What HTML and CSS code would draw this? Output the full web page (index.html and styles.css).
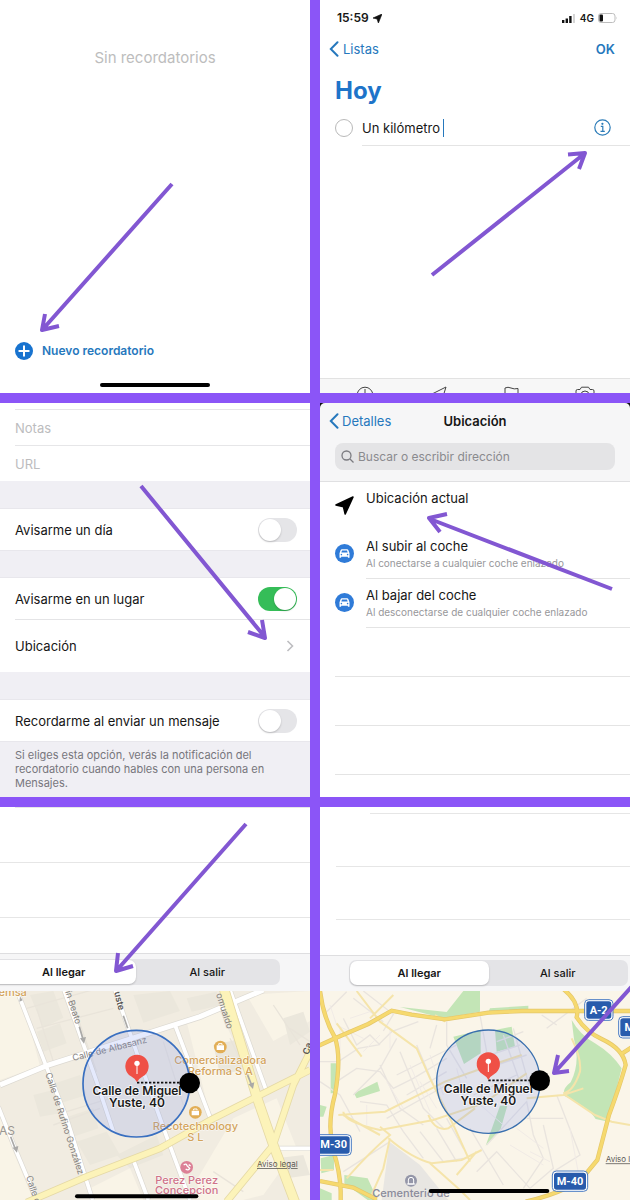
FILE: index.html
```html
<!DOCTYPE html>
<html lang="es">
<head>
<meta charset="utf-8">
<meta name="viewport" content="width=device-width, initial-scale=1">
<title>Recordatorios por ubicación</title>
<link rel="stylesheet" href="styles.css">
</head>
<body>
<main class="board">

  <section class="panel panel-empty">
    <p class="empty-text">Sin recordatorios</p>
    <button class="new-reminder" type="button">
      <svg width="18" height="18" viewBox="0 0 18 18" aria-hidden="true"><circle cx="9" cy="9" r="9" fill="#1873cf"/><path d="M9 4.3v9.4M4.3 9h9.4" stroke="#fff" stroke-width="2" stroke-linecap="round"/></svg>
      Nuevo recordatorio
    </button>
    <div class="home-bar"></div>
    <svg class="arrow" viewBox="0 0 310 393" aria-hidden="true"><path d="M172 184 43 329M45 314l-3 16 17-4"/></svg>
  </section>

  <section class="panel panel-today">
    <div class="status">
      <span class="status-left">15:59
        <svg width="9" height="9" viewBox="0 0 20 20" aria-hidden="true"><path d="M20 0 12 20 9 11 0 9Z" fill="#111" stroke="#111" stroke-width="1.500"/></svg>
      </span>
      <span class="status-right">
        <svg width="14" height="10" viewBox="0 0 14 10" aria-hidden="true"><path d="M0 7h2.4v3H0zM3.6 5.500H6V10H3.600zM7.200 3h2.400v7H7.200z" fill="#111"/><path d="M11 1h2v9h-2z" fill="#d5d5d5"/></svg>
        4G
        <svg width="20" height="10" viewBox="0 0 20 10" aria-hidden="true"><rect x=".5" y=".5" width="16.500" height="9" rx="2.500" fill="none" stroke="#bdbdbd"/><rect x="1.500" y="1.500" width="3.500" height="7" rx="1" fill="#111"/><path d="M18.300 3.500v3q1.200-1.500 0-3z" fill="#bbb"/></svg>
      </span>
    </div>
    <nav class="navbar">
      <a class="back" href="#"><svg width="10" height="16" viewBox="0 0 10 16" aria-hidden="true"><path d="M8.500 1.200 1.800 8l6.700 6.800"/></svg>Listas</a>
      <button class="ok" type="button">OK</button>
    </nav>
    <h1 class="title">Hoy</h1>
    <div class="task">
      <input class="task-check" type="checkbox" aria-label="Completar">
      <div class="task-body">
        <input class="task-name" type="text" value="Un kilómetro" size="10" aria-label="Recordatorio"><span class="caret"></span>
        <button class="info" type="button" aria-label="Información"><svg width="17" height="17" viewBox="0 0 17 17" aria-hidden="true"><circle cx="8.500" cy="8.500" r="7.700" fill="none" stroke="#2c7cb8" stroke-width="1.200"/><circle cx="8.400" cy="4.800" r="1.100" fill="#2c7cb8"/><path d="M6.800 7.300h2v5M6.500 12.400h4.300" fill="none" stroke="#2c7cb8" stroke-width="1.200"/></svg></button>
      </div>
    </div>
    <div class="quickbar">
      <svg viewBox="0 0 20 20" aria-hidden="true"><circle cx="10" cy="9" r="7.800"/><path d="M10 3v6h4"/></svg>
      <svg viewBox="0 0 20 20" aria-hidden="true"><path d="M18 1 4 8l8 2 1 7z"/></svg>
      <svg viewBox="0 0 20 20" aria-hidden="true"><path d="M3 18V2q3-1.500 6 0t7 .5V12H3"/></svg>
      <svg viewBox="0 0 20 20" aria-hidden="true"><path d="M1 16V5q0-1.500 1.500-1.500H5L6.500 1.200h7L15 3.500h2.500Q19 3.500 19 5v11z"/><circle cx="10" cy="9" r="4"/></svg>
    </div>
    <svg class="arrow" viewBox="0 0 310 393" aria-hidden="true"><path d="M112 275 264 154M248 154.500l17-1.500-6 16"/></svg>
  </section>

  <section class="panel panel-details">
    <div class="fields">
      <input class="field" type="text" placeholder="Notas" aria-label="Notas">
      <input class="field" type="url" placeholder="URL" aria-label="URL">
    </div>
    <label class="setting setting-spaced">Avisarme un día <input class="switch" type="checkbox"></label>
    <label class="setting setting-spaced">Avisarme en un lugar <input class="switch" type="checkbox" checked></label>
    <a class="setting setting-link" href="#">Ubicación <svg width="8" height="12" viewBox="0 0 8 12" aria-hidden="true"><path d="M1.500 1 6.500 6l-5 5" fill="none" stroke="#bdbdc0" stroke-width="1.600"/></svg></a>
    <label class="setting setting-spaced">Recordarme al enviar un mensaje <input class="switch" type="checkbox"></label>
    <p class="note">Si eliges esta opción, verás la notificación del recordatorio cuando hables con una persona en Mensajes.</p>
    <svg class="arrow" viewBox="0 0 310 394" aria-hidden="true"><path d="M141 83 264 233M248 229l17 6-3-18"/></svg>
  </section>

  <section class="panel panel-place">
    <header class="place-head">
      <nav class="place-nav">
        <a class="back" href="#"><svg width="10" height="16" viewBox="0 0 10 16" aria-hidden="true"><path d="M8.500 1.200 1.800 8l6.700 6.800"/></svg>Detalles</a>
        <h2>Ubicación</h2>
      </nav>
      <label class="search">
        <svg width="13" height="13" viewBox="0 0 13 13" aria-hidden="true"><circle cx="5.500" cy="5.500" r="4.500"/><path d="m9 9 3.500 3.500"/></svg>
        <input type="search" placeholder="Buscar o escribir dirección" aria-label="Buscar o escribir dirección">
      </label>
    </header>
    <ul class="places">
      <li class="place place-current">
        <svg width="19" height="19" viewBox="0 0 19 19" aria-hidden="true"><path d="M18 1 10.200 18 8.500 10.800 1 9Z" fill="#000" stroke="#000" stroke-width="1.600" stroke-linejoin="round"/></svg>
        <div class="place-text"><strong>Ubicación actual</strong></div>
      </li>
      <li class="place">
        <svg width="19" height="19" viewBox="0 0 19 19" aria-hidden="true"><circle cx="9.500" cy="9.500" r="9.500" fill="#2f7bd8"/><path d="M4.500 9.200 5.700 6q.3-.8 1.200-.8h5.200q.9 0 1.200.8l1.200 3.200v4.600h-1.600v-1H6.100v1H4.500z" fill="#fff"/><path d="M6.300 8.400 7 6.500h5l.7 1.900z" fill="#2f7bd8"/><circle cx="6.400" cy="10.600" r=".8" fill="#2f7bd8"/><circle cx="12.600" cy="10.600" r=".8" fill="#2f7bd8"/></svg>
        <div class="place-text"><strong>Al subir al coche</strong><span>Al conectarse a cualquier coche enlazado</span></div>
      </li>
      <li class="place">
        <svg width="19" height="19" viewBox="0 0 19 19" aria-hidden="true"><circle cx="9.500" cy="9.500" r="9.500" fill="#2f7bd8"/><path d="M4.500 9.200 5.700 6q.3-.8 1.200-.8h5.200q.9 0 1.200.8l1.200 3.200v4.600h-1.600v-1H6.100v1H4.500z" fill="#fff"/><path d="M6.300 8.400 7 6.500h5l.7 1.900z" fill="#2f7bd8"/><circle cx="6.400" cy="10.600" r=".8" fill="#2f7bd8"/><circle cx="12.600" cy="10.600" r=".8" fill="#2f7bd8"/></svg>
        <div class="place-text"><strong>Al bajar del coche</strong><span>Al desconectarse de cualquier coche enlazado</span></div>
      </li>
    </ul>
    <div class="blank-row"></div><div class="blank-row"></div><div class="blank-row"></div>
    <svg class="arrow" viewBox="0 0 310 394" aria-hidden="true"><path d="M292 186 110 116M127 111l-18 4 11 14"/></svg>
  </section>

  <section class="panel panel-arrive">
    <div class="lines"><i class="line line-inset"></i><i class="line"></i><i class="line"></i></div>
    <div class="segbar">
      <div class="segment" role="group" aria-label="Aviso">
        <button type="button" aria-pressed="true">Al llegar</button>
        <button type="button" aria-pressed="false">Al salir</button>
      </div>
    </div>
    <svg class="map" viewBox="0 18 930 627" preserveAspectRatio="xMidYMid slice" role="img" aria-label="Mapa de calles">
      <rect y="18" width="930" height="627" fill="#f1ece1"/>
      <g fill="#f9f4e7">
        <path d="M0 18h60l60 225L0 285zM0 390l40 110 60 145H0zM560 110l100-30 120 260-150 50zM700 400l130-60 60 150-100 140-60 15H600l-10-60zM860 480l70 10v155h-50zM270 610l120-60 40 95H280zM740 30l190-12v90l-110 60z"/>
      </g>
      <g fill="#ebe7dc">
        <path d="M90 30l70-12 30 80-60 30zM110 140l70-25 20 60-70 25zM150 300l90-30 20 60-80 25zM100 330l60-15 20 70-60 10zM190 400l90-30 15 60-90 30zM230 470l90-30 40 70-90 30zM400 30l110-12 30 60-110 35zM560 40l90-20 15 40-90 20zM850 100l60-20 20 60-60 40zM830 520l80-10 20 60-70 10zM350 510l120-60 20 60-100 40zM640 180l90-20 20 90-90 20z"/>
      </g>
      <g fill="none" stroke="#e9e4da" stroke-width="4">
        <path d="M80 70 330 0M110 130 340 70M160 230l-50-160M200 380l130-40M160 420l140-50M240 530l-60-150M220 60l70 200M650 30l30 100M690 160l90 190M870 130l60 40M820 60l80 120M490 170l60 190M640 560l90 60"/>
      </g>
      <g fill="none" stroke-linecap="butt">
        <g stroke="#dcd9d2">
          <path d="M0 300 140 242 600 95 790 15" stroke-width="19"/>
          <path d="M58 35 138 242 200 400 278 645M-5 365 45 490 110 645M192 15 290 290 340 440M345 15 430 260 500 455 570 645M525 120 632 402M690 15 800 320M400 525l45 120M835 490h95" stroke-width="15"/>
        </g>
        <g stroke="#fff">
          <path d="M0 300 140 242 600 95 790 15" stroke-width="15"/>
          <path d="M58 35 138 242 200 400 278 645M-5 365 45 490 110 645M192 15 290 290 340 440M345 15 430 260 500 455 570 645M525 120 632 402M690 15 800 320M400 525l45 120M835 490h95" stroke-width="11"/>
        </g>
        <g stroke="#e5d9a5">
          <path d="M80 652 260 575 480 490 632 405 770 335 930 255M680 650 820 480 880 300 935 190" stroke-width="22"/>
          <path d="M670 5 770 335 820 480 888 660" stroke-width="31"/>
        </g>
        <g stroke="#fcf3b9">
          <path d="M80 652 260 575 480 490 632 405 770 335 930 255M680 650 820 480 880 300 935 190" stroke-width="17"/>
          <path d="M670 5 770 335 820 480 888 660" stroke-width="26"/>
        </g>
      </g>
      <path d="M238 125 248 160M32 455 45 490M370 92 383 130M742 268 754 298" fill="none" stroke="#aaa9a7" stroke-width="5"/>
      <path d="M240 160 258 156 252 176zM38 488 55 483 51 503zM745 298 763 292 759 312zM58 50 68 46 60 34z" fill="#aaa9a7"/>
      <g class="map-street">
        <text class="map-district" x="-3" y="450">AS</text>
        <text transform="translate(195 20) rotate(72)">ín Beato</text>
        <text class="map-dark" transform="translate(343 22) rotate(77)">uste</text>
        <text transform="translate(220 228) rotate(-14)">Calle de Albasanz</text>
        <text transform="translate(136 266) rotate(72)">Calle de Rufino González</text>
        <text transform="translate(78 575) rotate(72)">Calle de</text>
        <text transform="translate(648 28) rotate(72)">omualdo</text>
        <text class="map-dark" transform="translate(926 210) rotate(-75)">Ca</text>
      </g>
      <g class="map-business">
        <text x="38" y="34">emsa</text>
        <text x="661" y="237">Comercializadora</text><text x="661" y="270">Reforma S A</text>
        <text x="586" y="434">Recotechnology</text><text x="586" y="467">S L</text>
      </g>
      <g fill="#e2ae56"><circle cx="661" cy="186" r="19"/><circle cx="586" cy="382" r="19"/></g>
      <g fill="#fff"><path d="M650 181h22v14h-22zM575 377h22v14h-22z"/><path d="M656 180v-4h10v4M581 376v-4h10v4" fill="none" stroke="#fff" stroke-width="3"/></g>
      <g class="map-medical"><text x="560" y="596">Perez Perez</text><text x="560" y="628">Concepcion</text></g>
      <circle cx="560" cy="547" r="19" fill="#dc8096"/><path d="M551 540q8-6 10 2l8 8q-4 8-12 2M566 539l6 4" fill="none" stroke="#fff" stroke-width="4"/>
      <circle cx="409" cy="296" r="160" fill="#7392f5" fill-opacity=".19" stroke="#396fc0" stroke-width="5"/>
      <path d="M411 293h135" stroke="#111" stroke-width="5" stroke-dasharray="7 5"/>
      <path d="M411 292q-5-11-18-18a35 35 0 1 1 36 0q-13 7-18 18z" fill="#ef5046"/><circle cx="411" cy="235" r="8" fill="#fff"/><path d="M411 240v27" stroke="#fff" stroke-width="3"/>
      <g class="map-place"><text x="411" y="330">Calle de Miguel</text><text x="411" y="366">Yuste, 40</text></g>
      <circle cx="569" cy="294" r="31" fill="#000"/>
      <a href="#"><text class="map-legal" x="771" y="546">Aviso legal</text></a>
      <path d="M231 634h358" stroke="#000" stroke-width="12" stroke-linecap="round"/>
    </svg>
    <svg class="arrow" viewBox="0 0 310 393" aria-hidden="true"><path d="M246 17 117 163M118 146l-2 18 17-5"/></svg>
  </section>

  <section class="panel panel-radius">
    <div class="lines"><i class="line line-inset"></i><i class="line"></i><i class="line"></i></div>
    <div class="segbar">
      <div class="segment" role="group" aria-label="Aviso">
        <button type="button" aria-pressed="true">Al llegar</button>
        <button type="button" aria-pressed="false">Al salir</button>
      </div>
    </div>
    <svg class="map" viewBox="30 18 930 627" preserveAspectRatio="xMidYMid slice" role="img" aria-label="Mapa del distrito">
      <rect x="30" y="18" width="930" height="627" fill="#faf5e9"/>
      <g fill="#c3e5b6">
        <path d="M270 66l140 15 50-63h50v62l-110 20zM540 70l115-8v14l-120 6zM430 155l50-12 32-8v70l-50 32zM555 135l50-10 10 60-55 15zM132 325l70-35 8 28-70 22zM62 235h16v90H62zM32 520l40-10v45l-38 10zM103 570l70 10 30 65h-30l-70-50zM30 610l35 15v20H30zM570 362h22l-20 70-45 50zM785 105q25 45 70 70 50 30 80 75l-40 160-38-8q-20-35-95-70-6-20 20-40 30-60 10-130zM30 360l20 5-10 30H30z"/>
      </g>
      <path d="M238 470 330 540 415 645H215z" fill="#e8e6e2"/>
      <g fill="none" stroke="#e9e4de" stroke-width="4">
        <path d="M30 230h55l60-40 60-10 40-40 80-30M100 100l40 80 40-30 30 30M80 290l60-40 70 10 40 50 60-30 100-60M130 330l80-80 50-90M30 290l60 40 60 110M150 350l80 10 50 80 60 80M210 240l60 130 70 50M270 200l70 170 60 60M320 180l80 190M410 110v70l60 100M260 270l180-90M290 330l120-70M230 400l180-100M100 560l140-90M330 440l70 90 60-10M380 120l-20 70M50 80l60-60M130 40l90 70M160 18l90 70-30 50M510 90l20 110 20 60M490 330l130-60M530 480l120-130 20 100 30 70-60 90M650 400h110M700 420l30 130-70 60M740 330l70 180-80 50M480 430l100 170M500 560l60-60 100 110M710 130l120-90M740 120l-45-30M560 170l80-30M540 210l90-30M560 240l90-30M580 150l60 170M610 130l50 180M380 430l60 100M410 400l50 90"/>
      </g>
      <g fill="none" stroke="#f1ebe6" stroke-width="3">
        <path d="M60 60l20 60 80 40M90 130v80M120 100l60-20M160 200l50-50M170 360v60M230 290l50 80M240 130v60M300 240l60 140M330 290l50 80M360 210l40 120M440 250l20 80M500 350l80 70M600 480l100 60M620 430l80 60M780 430l30 160M660 500l60 30"/>
      </g>
      <g fill="none" stroke="#f5e4aa" stroke-width="6">
        <path d="M140 18 210 110l110 80 40 90 70 140 50 110M85 390l140-10 180-90 140-50 90-30M100 380q0 30 110 55l160-30 150-50 130-90M110 580q70-80 130-130l-30-25M235 460q70 60 130 75l90-10 60-30M240 460l-20 90-40 90M360 535l90 80 30 30M355 390q20 50 60 40l80-60M650 340l110-10 60-20M765 330l90 60 50 20 55 10M440 570l60-70M80 115l45 60 30 40M70 555h-40M100 390l110 60M785 160q30 60 25 100-20 60-50 65M180 100l70-70M405 110l-30-20"/>
      </g>
      <g fill="none" stroke="#e4c66a">
        <path d="M20 185 70 162l105-45 70-40 60 12 100 14 130-20 100-5h400M30 18q10 80 45 140 20 60 0 170-25 90-5 170 20 60 22 120v45M760 12q50 40 40 85 30 45 75 65 65 30 72 78-20 70-50 150l-35 135-25 30q-40 60-190 95M937 205l28-18M30 588l100 20 70 35" stroke-width="13"/>
      </g>
      <g fill="none" stroke="#f6d96e">
        <path d="M20 185 70 162l105-45 70-40 60 12 100 14 130-20 100-5h400M30 18q10 80 45 140 20 60 0 170-25 90-5 170 20 60 22 120v45M760 12q50 40 40 85 30 45 75 65 65 30 72 78-20 70-50 150l-35 135-25 30q-40 60-190 95M937 205l28-18M30 588l100 20 70 35" stroke-width="9"/>
      </g>
      <circle cx="535" cy="290" r="155" fill="#7392f5" fill-opacity=".19" stroke="#396fae" stroke-width="4"/>
      <path d="M535 286h130" stroke="#111" stroke-width="5" stroke-dasharray="7 5"/>
      <path d="M535 285q-5-11-18-18a35 35 0 1 1 36 0q-13 7-18 18z" fill="#ef5046"/><circle cx="535" cy="229" r="8" fill="#fff"/><path d="M535 234v27" stroke="#fff" stroke-width="3"/>
      <g class="map-place"><text x="535" y="323">Calle de Miguel</text><text x="535" y="359">Yuste, 40</text></g>
      <circle cx="689" cy="287" r="31" fill="#000"/>
      <g fill="#285bac" stroke="#fff" stroke-width="4">
        <rect x="18" y="452" width="103" height="56" rx="10"/><rect x="827" y="47" width="79" height="56" rx="10"/><rect x="929" y="98" width="90" height="58" rx="10"/><rect x="730" y="561" width="100" height="55" rx="10"/>
      </g>
      <g fill="none" stroke="#4a7cc4" stroke-width="3">
        <rect x="15" y="449" width="109" height="62" rx="12"/><rect x="824" y="44" width="85" height="62" rx="12"/><rect x="926" y="95" width="96" height="64" rx="12"/><rect x="727" y="558" width="106" height="61" rx="12"/>
      </g>
      <g class="map-shield"><text x="71" y="490">M-30</text><text x="866" y="86">A-2</text><text x="958" y="139">M</text><text x="780" y="600">M-40</text></g>
      <circle cx="303" cy="587" r="18" fill="#9496a8"/><path d="M295 597v-12a8 8 0 0 1 16 0v12zM290 597h26" fill="none" stroke="#fff" stroke-width="3"/>
      <text class="map-cemetery" x="303" y="636">Cementerio de</text>
      <a href="#"><text class="map-legal" x="887" y="532">Aviso legal</text></a>
      <path d="M362 618h350" stroke="#000" stroke-width="12" stroke-linecap="round"/>
    </svg>
    <svg class="arrow" viewBox="0 0 310 393" aria-hidden="true"><path d="M314 177 235 265M238 248l-4 18 15-2"/></svg>
  </section>

</main>
</body>
</html>
```

FILE: styles.css
```css
* { box-sizing: border-box; }

body {
  margin: 0;
  background: #8b55f7;
  color: #161616;
  font-family: Inter, "Liberation Sans", sans-serif;
  font-size: 13px;
}

h1, h2, p, ul { margin: 0; padding: 0; }
a { text-decoration: none; color: inherit; }
button, input { font: inherit; color: inherit; border: 0; padding: 0; background: none; }
input { outline: 0; min-width: 0; }

.board {
  display: grid;
  grid-template-columns: 1fr 1fr;
  grid-template-rows: minmax(393px, auto) minmax(394px, auto) minmax(393px, auto);
  gap: 10px;
  min-height: 100vh;
}

.panel {
  position: relative;
  display: flex;
  flex-direction: column;
  overflow: hidden;
  min-width: 0;
  background: #fff;
}

.arrow {
  position: absolute;
  inset: 0;
  width: 100%;
  height: 100%;
  pointer-events: none;
  fill: none;
  stroke: #8257d2;
  stroke-width: 4;
  stroke-linejoin: round;
}

/* Empty list */
.panel-empty { align-items: center; }
.empty-text { padding-top: 48px; font-size: 15px; line-height: 20px; color: #bdbdbd; }
.new-reminder {
  display: flex;
  align-items: center;
  align-self: flex-start;
  gap: 9px;
  margin: auto 0 22px 15px;
  font-size: 12px;
  font-weight: 600;
  line-height: 20px;
  color: #2678bd;
}
.home-bar { width: 110px; height: 4px; margin-bottom: 6px; border-radius: 2px; background: #000; }

/* Today list */
.status {
  display: flex;
  justify-content: space-between;
  padding: 10px 12px 0 17px;
  font-size: 12px;
  font-weight: 600;
  line-height: 16px;
}
.status-left, .status-right { display: flex; align-items: center; gap: 4px; }
.status-right { font-size: 10px; }
.navbar {
  display: flex;
  justify-content: space-between;
  align-items: center;
  padding: 13px 15px 0 9px;
  line-height: 20px;
  color: #2678bd;
}
.back { display: flex; align-items: center; gap: 4px; color: #2678bd; }
.back svg { fill: none; stroke: #2678bd; stroke-width: 2; stroke-linecap: round; }
.ok { font-weight: 600; }
.title { padding: 16px 15px 0; font-size: 24px; line-height: 32px; color: #1e74c9; }
.task { display: flex; align-items: flex-start; gap: 9px; padding: 10px 0 0 15px; }
.task-check {
  appearance: none;
  width: 18px;
  height: 18px;
  margin: 2px 0 0;
  border: 1px solid #b9b9b9;
  border-radius: 50%;
}
.task-body {
  display: flex;
  flex: 1;
  align-items: center;
  height: 29px;
  padding: 0 19px 7px 0;
  border-bottom: 1px solid #e4e4e4;
}
.task-name { field-sizing: content; }
.caret { width: 1px; height: 18px; margin-left: 3px; background: #2678bd; }
.info { display: flex; margin-left: auto; }
.quickbar {
  display: flex;
  justify-content: space-between;
  height: 15px;
  margin-top: auto;
  padding: 7px 35px 0;
  overflow: hidden;
  border-top: 1px solid #e2e2e2;
  background: #f7f7f7;
}
.quickbar svg { flex: none; width: 20px; height: 20px; fill: none; stroke: #444; stroke-width: 1; }

/* Reminder details */
.panel-details { background: #f0eff4; }
.fields { display: flex; flex-direction: column; padding: 6px 0 0 15px; background: #fff; }
.field { height: 36px; border-top: 1px solid #e6e6e8; }
.field::placeholder { color: #bcbcbe; opacity: 1; }
.setting {
  display: flex;
  align-items: center;
  justify-content: space-between;
  height: 41px;
  padding: 0 13px 0 15px;
  background: #fff;
}
.setting-spaced { margin-top: 28px; box-shadow: 0 0 0 1px #e8e7ec; }
.setting-link {
  position: relative;
  height: 53px;
  padding-right: 16px;
}
.setting-link::before { content: ""; position: absolute; top: 0; left: 15px; right: 0; height: 1px; background: #e4e4e6; }
.switch {
  appearance: none;
  display: flex;
  width: 39px;
  height: 24px;
  margin: 0;
  padding: 1px;
  border-radius: 12px;
  background: #e5e5e8;
}
.switch::before { content: ""; width: 22px; height: 22px; border-radius: 50%; background: #fff; box-shadow: 0 1px 2px #0003; }
.switch:checked { justify-content: flex-end; background: #35bd58; }
.note { padding: 7px 45px 0 15px; font-size: 11px; line-height: 14px; color: #77767c; }

/* Location picker */
.panel-place::before { content: ""; position: absolute; inset: 0 0 auto; height: 6px; background: #111; }
.place-head {
  position: relative;
  height: 79px;
  padding: 8px 15px 0;
  border-bottom: 1px solid #e0e0e2;
  border-radius: 5px 5px 0 0;
  background: #f6f6f7;
}
.place-nav {
  display: grid;
  grid-template-columns: 1fr auto 1fr;
  align-items: center;
  margin-left: -6px;
  margin-right: -6px;
  line-height: 20px;
}
.place-nav .back { gap: 3px; }
.place-nav h2 { font-size: 13px; font-weight: 600; }
.search {
  display: flex;
  align-items: center;
  gap: 4px;
  height: 27px;
  margin-top: 12px;
  padding: 0 6px;
  border-radius: 8px;
  background: #e4e4e6;
}
.search svg { fill: none; stroke: #7b7b80; stroke-width: 1.300; }
.search input { flex: 1; font-size: 12px; }
.search input::placeholder { color: #8a8a8e; opacity: 1; }
.places { list-style: none; }
.place { display: flex; align-items: flex-start; gap: 12px; padding-left: 15px; }
.place > svg { flex: none; margin-top: 14px; }
.place-text {
  display: flex;
  flex: 1;
  flex-direction: column;
  height: 49px;
  padding-top: 6px;
  border-bottom: 1px solid #e4e4e4;
}
.place-current .place-text { height: 48px; border-color: #fff; }
.place-text strong { font-weight: 400; line-height: 20px; }
.place-text span { font-size: 10px; line-height: 14px; color: #97979a; }
.blank-row { height: 49px; margin-left: 15px; border-bottom: 1px solid #e4e4e4; }

/* Arrival maps */
.lines { display: flex; flex-direction: column; }
.line { height: 55px; border-bottom: 1px solid #e6e6e6; }
.panel-arrive .line-inset { height: 1px; margin-left: 15px; }
.panel-arrive .lines { height: 146px; }
.panel-radius .lines { height: 148px; }
.panel-radius .line { height: 53px; margin-left: 16px; }
.panel-radius .line-inset { height: 7px; margin-left: 50px; }
.segbar { height: 38px; padding: 5px 30px 0 0; border-top: 1px solid #dedee0; background: #f6f6f7; }
.panel-radius .segbar { height: 36px; padding: 4px 2px 0 29px; }
.segment { display: grid; grid-template-columns: 1fr 1fr; height: 26px; padding: 1px; border-radius: 7px; background: #e4e4e7; }
.panel-arrive .segment { margin-left: -9px; }
.segment button { border-radius: 7px; font-size: 11px; font-weight: 500; }
.segment button[aria-pressed="true"] { background: #fff; font-weight: 600; box-shadow: 0 1px 2px #0003; }
.map { display: block; flex: 1; width: 100%; min-height: 209px; }

/* Map text is set in map units, three to a pixel */
.map text { font-family: Inter, "Liberation Sans", sans-serif; }
.map-street text { font-size: 27px; fill: #85827f; }
.map-street .map-dark { fill: #55524f; font-weight: 600; }
.map-street .map-district { font-size: 36px; fill: #9a9793; }
.map-business text { font-size: 33px; font-weight: 500; fill: #d3a35a; text-anchor: middle; paint-order: stroke; stroke: #fffc; stroke-width: 3px; }
.map-medical text { font-size: 33px; font-weight: 500; fill: #cf7389; text-anchor: middle; paint-order: stroke; stroke: #fffc; stroke-width: 3px; }
.map-place text { font-size: 36px; font-weight: 600; fill: #1b1b1b; text-anchor: middle; paint-order: stroke; stroke: #fffc; stroke-width: 5px; }
.map .map-legal { font-size: 24px; fill: #5c5a57; text-decoration: underline; }
.map .map-cemetery { font-size: 33px; font-weight: 500; fill: #8a8b9b; text-anchor: middle; }
.map-shield text { font-family: Roboto, "Liberation Sans", sans-serif; font-size: 33px; font-weight: 700; fill: #fff; text-anchor: middle; }
```
